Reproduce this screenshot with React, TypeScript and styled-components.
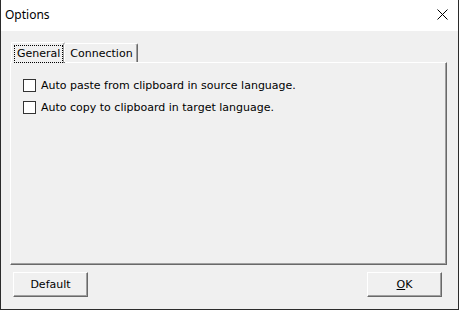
import styled, { createGlobalStyle } from 'styled-components';

const Global = createGlobalStyle`
  html, body { margin: 0; padding: 0; background: #f0f0f0; }
  * { box-sizing: border-box; }
`;

const Window = styled.div`
  width: 459px;
  height: 310px;
  display: flex;
  flex-direction: column;
  background: #f0f0f0;
  border: 1px solid #2b2b2b;
  border-top: none;
  font-family: Tahoma, "DejaVu Sans", sans-serif;
  font-size: 11px;
  color: #000;
`;

const TitleBar = styled.div`
  height: 31px;
  flex: none;
  background: #fff;
  display: flex;
  align-items: center;
  justify-content: space-between;
  padding: 0 10px 3px 4px;
  font-family: "Noto Sans", "Open Sans", sans-serif;
  font-size: 12px;
`;

const CloseIcon = () => (
  <svg width="11" height="11" viewBox="0 0 11 11">
    <path d="M0.5 0.5 L10.5 10.5 M10.5 0.5 L0.5 10.5" stroke="#000" strokeWidth="1" fill="none" />
  </svg>
);

const Body = styled.div`
  flex: 1;
  display: flex;
  flex-direction: column;
  padding: 11px 11px 0 9px;
`;

const TabStrip = styled.div`
  display: flex;
  align-items: flex-end;
  padding-left: 1px;
  position: relative;
  z-index: 1;
`;

const Tab = styled.div<{ $active?: boolean }>`
  height: ${(p) => (p.$active ? 21 : 19)}px;
  margin-bottom: ${(p) => (p.$active ? -1 : 0)}px;
  margin-left: ${(p) => (p.$active ? 0 : -1)}px;
  padding: ${(p) => (p.$active ? '2px 1px 0 2px' : '1px 1px 0 2px')};
  background: #f0f0f0;
  border-top: 1px solid #fff;
  border-left: 1px solid #fff;
  border-right: 1px solid #696969;
  box-shadow: inset -1px 0 0 #a0a0a0;
  border-radius: 2px 2px 0 0;
  display: flex;
  align-items: flex-start;
`;

const TabLabel = styled.span<{ $focus?: boolean }>`
  display: inline-block;
  padding: 1px 2px 2px 2px;
  line-height: 13px;
  border: 1px ${(p) => (p.$focus ? 'dotted #000' : 'solid transparent')};
`;

const Panel = styled.div`
  height: 203px;
  flex: none;
  border-top: 1px solid #fff;
  border-left: 1px solid #fff;
  border-right: 1px solid #696969;
  border-bottom: 1px solid #696969;
  box-shadow: inset -1px -1px 0 #a0a0a0;
  padding: 16px 12px;
  display: flex;
  flex-direction: column;
  gap: 9px;
`;

const CheckRow = styled.label`
  display: flex;
  align-items: center;
  gap: 5px;
  height: 13px;
`;

const Box = styled.span`
  width: 13px;
  height: 13px;
  flex: none;
  background: #fff;
  border: 1px solid #333;
`;

const Buttons = styled.div`
  display: flex;
  justify-content: space-between;
  padding: 7px 5px 0 3px;
`;

const Button = styled.button`
  width: 75px;
  height: 25px;
  background: #f0f0f0;
  border: none;
  border-top: 1px solid #fff;
  border-left: 1px solid #fff;
  border-right: 1px solid #696969;
  border-bottom: 1px solid #696969;
  box-shadow: inset -1px -1px 0 #a0a0a0;
  font: inherit;
  color: #000;
  padding: 0 0 1px 0;
`;

export default function App() {
  return (
    <>
      <Global />
      <Window>
        <TitleBar>
          <span>Options</span>
          <CloseIcon />
        </TitleBar>
        <Body>
          <TabStrip>
            <Tab $active>
              <TabLabel $focus>General</TabLabel>
            </Tab>
            <Tab>
              <TabLabel>Connection</TabLabel>
            </Tab>
          </TabStrip>
          <Panel>
            <CheckRow>
              <Box />
              Auto paste from clipboard in source language.
            </CheckRow>
            <CheckRow>
              <Box />
              Auto copy to clipboard in target language.
            </CheckRow>
          </Panel>
          <Buttons>
            <Button>Default</Button>
            <Button>
              <u>O</u>K
            </Button>
          </Buttons>
        </Body>
      </Window>
    </>
  );
}
